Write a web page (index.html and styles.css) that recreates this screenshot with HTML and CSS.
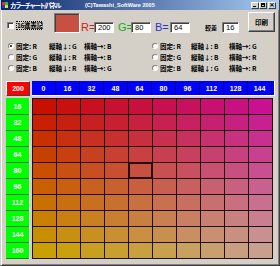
FILE: index.html
```html
<!DOCTYPE html>
<html lang="ja">
<head>
<meta charset="utf-8">
<link rel="stylesheet" href="styles.css">
</head>
<body>
<div class="win">
  <div class="title">
    <span class="ico"><i class="c1"></i><i class="c2"></i><i class="c3"></i><i class="c4"></i></span>
    <span class="ttl">カラーチャート/パネル</span>
    <span class="copy">(C)Tawashi_SoftWare 2005</span>
    <span class="tbtns"><span class="tb tb-min"></span><span class="tb tb-max"></span><span class="tb tb-close">×</span></span>
  </div>
  <div class="tools">
    <div class="chk"><span class="box"></span><span class="lbl">16進表記</span></div>
    <div class="swatch"></div>
    <span class="eq eq-r">R=</span><span class="inp">200</span>
    <span class="eq eq-g">G=</span><span class="inp">80</span>
    <span class="eq eq-b">B=</span><span class="inp">64</span>
    <span class="diff">較差</span><span class="inp inp-s">16</span>
    <span class="btn">印刷</span>
  </div>
  <div class="radios">
    <div class="rad"><span class="dot on"></span><span class="f">固定: R</span><span class="v">縦軸↓: G</span><span class="h">横軸→: B</span></div>
    <div class="rad rad-r"><span class="dot"></span><span class="f">固定: R</span><span class="v">縦軸↓: B</span><span class="h">横軸→: G</span></div>
    <div class="rad"><span class="dot"></span><span class="f">固定: G</span><span class="v">縦軸↓: R</span><span class="h">横軸→: B</span></div>
    <div class="rad rad-r"><span class="dot"></span><span class="f">固定: G</span><span class="v">縦軸↓: B</span><span class="h">横軸→: R</span></div>
    <div class="rad"><span class="dot"></span><span class="f">固定: B</span><span class="v">縦軸↓: R</span><span class="h">横軸→: G</span></div>
    <div class="rad rad-r"><span class="dot"></span><span class="f">固定: B</span><span class="v">縦軸↓: G</span><span class="h">横軸→: R</span></div>
  </div>
  <div class="chart">
    <div class="corner">200</div>
    <div class="hdr">
      <span>0</span><span>16</span><span>32</span><span>48</span><span>64</span><span>80</span><span>96</span><span>112</span><span>128</span><span>144</span>
    </div>
    <div class="side">
      <span>16</span><span>32</span><span>48</span><span>64</span><span>80</span><span>96</span><span>112</span><span>128</span><span>144</span><span>160</span>
    </div>
    <div class="cells">
      <i style="background:rgb(200,16,0)"></i><i style="background:rgb(200,16,16)"></i><i style="background:rgb(200,16,32)"></i><i style="background:rgb(200,16,48)"></i><i style="background:rgb(200,16,64)"></i><i style="background:rgb(200,16,80)"></i><i style="background:rgb(200,16,96)"></i><i style="background:rgb(200,16,112)"></i><i style="background:rgb(200,16,128)"></i><i style="background:rgb(200,16,144)"></i>
      <i style="background:rgb(200,32,0)"></i><i style="background:rgb(200,32,16)"></i><i style="background:rgb(200,32,32)"></i><i style="background:rgb(200,32,48)"></i><i style="background:rgb(200,32,64)"></i><i style="background:rgb(200,32,80)"></i><i style="background:rgb(200,32,96)"></i><i style="background:rgb(200,32,112)"></i><i style="background:rgb(200,32,128)"></i><i style="background:rgb(200,32,144)"></i>
      <i style="background:rgb(200,48,0)"></i><i style="background:rgb(200,48,16)"></i><i style="background:rgb(200,48,32)"></i><i style="background:rgb(200,48,48)"></i><i style="background:rgb(200,48,64)"></i><i style="background:rgb(200,48,80)"></i><i style="background:rgb(200,48,96)"></i><i style="background:rgb(200,48,112)"></i><i style="background:rgb(200,48,128)"></i><i style="background:rgb(200,48,144)"></i>
      <i style="background:rgb(200,64,0)"></i><i style="background:rgb(200,64,16)"></i><i style="background:rgb(200,64,32)"></i><i style="background:rgb(200,64,48)"></i><i style="background:rgb(200,64,64)"></i><i style="background:rgb(200,64,80)"></i><i style="background:rgb(200,64,96)"></i><i style="background:rgb(200,64,112)"></i><i style="background:rgb(200,64,128)"></i><i style="background:rgb(200,64,144)"></i>
      <i style="background:rgb(200,80,0)"></i><i style="background:rgb(200,80,16)"></i><i style="background:rgb(200,80,32)"></i><i style="background:rgb(200,80,48)"></i><i class="sel" style="background:rgb(200,80,64)"></i><i style="background:rgb(200,80,80)"></i><i style="background:rgb(200,80,96)"></i><i style="background:rgb(200,80,112)"></i><i style="background:rgb(200,80,128)"></i><i style="background:rgb(200,80,144)"></i>
      <i style="background:rgb(200,96,0)"></i><i style="background:rgb(200,96,16)"></i><i style="background:rgb(200,96,32)"></i><i style="background:rgb(200,96,48)"></i><i style="background:rgb(200,96,64)"></i><i style="background:rgb(200,96,80)"></i><i style="background:rgb(200,96,96)"></i><i style="background:rgb(200,96,112)"></i><i style="background:rgb(200,96,128)"></i><i style="background:rgb(200,96,144)"></i>
      <i style="background:rgb(200,112,0)"></i><i style="background:rgb(200,112,16)"></i><i style="background:rgb(200,112,32)"></i><i style="background:rgb(200,112,48)"></i><i style="background:rgb(200,112,64)"></i><i style="background:rgb(200,112,80)"></i><i style="background:rgb(200,112,96)"></i><i style="background:rgb(200,112,112)"></i><i style="background:rgb(200,112,128)"></i><i style="background:rgb(200,112,144)"></i>
      <i style="background:rgb(200,128,0)"></i><i style="background:rgb(200,128,16)"></i><i style="background:rgb(200,128,32)"></i><i style="background:rgb(200,128,48)"></i><i style="background:rgb(200,128,64)"></i><i style="background:rgb(200,128,80)"></i><i style="background:rgb(200,128,96)"></i><i style="background:rgb(200,128,112)"></i><i style="background:rgb(200,128,128)"></i><i style="background:rgb(200,128,144)"></i>
      <i style="background:rgb(200,144,0)"></i><i style="background:rgb(200,144,16)"></i><i style="background:rgb(200,144,32)"></i><i style="background:rgb(200,144,48)"></i><i style="background:rgb(200,144,64)"></i><i style="background:rgb(200,144,80)"></i><i style="background:rgb(200,144,96)"></i><i style="background:rgb(200,144,112)"></i><i style="background:rgb(200,144,128)"></i><i style="background:rgb(200,144,144)"></i>
      <i style="background:rgb(200,160,0)"></i><i style="background:rgb(200,160,16)"></i><i style="background:rgb(200,160,32)"></i><i style="background:rgb(200,160,48)"></i><i style="background:rgb(200,160,64)"></i><i style="background:rgb(200,160,80)"></i><i style="background:rgb(200,160,96)"></i><i style="background:rgb(200,160,112)"></i><i style="background:rgb(200,160,128)"></i><i style="background:rgb(200,160,144)"></i>
    </div>
  </div>
</div>
</body>
</html>
```
FILE: styles.css
```css
* { box-sizing: border-box; margin: 0; padding: 0; }
html, body { width: 280px; height: 266px; overflow: hidden; background: #d4d0c8; }
body { font-family: "Noto Sans CJK JP", "Liberation Sans", sans-serif; font-size: 6px; color: #000; }

.win {
  width: 280px; height: 266px;
  background: #d4d0c8;
  border-left: 1px solid #d4d0c8;
  border-right: 1px solid #404040;
  border-bottom: 1px solid #404040;
  box-shadow: inset 1px 0 0 #fff, inset -1px -1px 0 #808080;
  display: flex; flex-direction: column;
}

.title {
  height: 10px;
  display: flex; align-items: center;
  background: linear-gradient(to right, #0a246a, #a6caf0);
  color: #fff;
  line-height: 10px;
  white-space: nowrap;
}
.ico { width: 6px; height: 6px; margin: 0 2px 0 1px; display: grid; grid-template-columns: 3px 3px; }
.ico i { display: block; }
.c1 { background: #e03030; } .c2 { background: #30c030; } .c3 { background: #3030e0; } .c4 { background: #e0e030; }
.ttl { width: 51px; font-size: 6.5px; font-weight: bold; letter-spacing: -1.6px; }
.copy { margin-left: 24px; font-family: "Liberation Sans", sans-serif; font-size: 5.5px; font-weight: bold; }
.tbtns { margin-left: auto; margin-right: 3px; display: flex; }
.tb {
  width: 8px; height: 7px; background: #d4d0c8;
  border: 1px solid; border-color: #fff #404040 #404040 #fff;
  position: relative; color: #000;
  font-size: 7px; line-height: 5px; text-align: center;
  font-family: "DejaVu Sans", sans-serif; font-weight: bold;
}
.tb-min::after { content: ""; position: absolute; left: 1px; bottom: 1px; width: 3px; height: 1px; background: #000; }
.tb-max::after { content: ""; position: absolute; left: 1px; top: 0; width: 4px; height: 4px; border: 1px solid #000; border-top-width: 2px; box-sizing: border-box; }
.tb-close { margin-left: 1px; }

.tools {
  height: 21px; margin-top: 2px;
  display: flex; align-items: flex-end;
  padding-left: 6px;
  white-space: nowrap;
}
.chk { display: flex; align-items: center; margin-bottom: 3px; }
.box { width: 7px; height: 7px; background: #fff; border: 1px solid; border-color: #808080 #fff #fff #808080; box-shadow: inset 1px 1px 0 #404040; }
.lbl { margin-left: 2px; width: 26px; height: 9px; border: 1px dotted #000; line-height: 7px; font-size: 6.5px; font-weight: bold; text-align: center; letter-spacing: -0.3px; }
.swatch {
  width: 26px; height: 20px; margin-left: 12px;
  background: rgb(200,80,64);
  border: 1px solid; border-color: #808080 #fff #fff #808080;
  box-shadow: inset 1px 1px 0 #404040;
}
.eq { font-family: "Liberation Sans", sans-serif; font-size: 11px; line-height: 12px; width: 13px; margin-bottom: 0; }
.eq-r { color: #d02020; margin-left: 1px; }
.eq-g { color: #10b010; margin-left: 4px; }
.eq-b { color: #3030d0; margin-left: 4px; width: 15px; }
.inp {
  width: 20px; height: 11px;
  background: #fff;
  border: 1px solid; border-color: #808080 #fff #fff #808080;
  box-shadow: inset 1px 1px 0 #404040;
  font-family: "Liberation Sans", sans-serif; font-size: 7.5px; line-height: 9px;
  padding-left: 3px;
}
.diff { margin-left: 15px; width: 17px; font-size: 6px; font-weight: bold; line-height: 10px; }
.inp-s { width: 17px; }
.btn {
  width: 27px; height: 20px; margin-left: 9px; margin-bottom: 1px;
  display: flex; align-items: center; justify-content: center;
  border: 1px solid; border-color: #fff #404040 #404040 #fff;
  box-shadow: inset -1px -1px 0 #808080;
  font-size: 6.5px; font-weight: bold;
}

.radios {
  margin-top: 7px;
  display: grid; grid-template-columns: 144px 130px;
  grid-template-rows: repeat(3, 11px);
  padding-left: 6px;
}
.rad { display: flex; align-items: center; height: 11px; font-size: 6.5px; font-weight: bold; white-space: nowrap; }
.dot { width: 6px; height: 6px; border-radius: 50%; background: #fff; border: 1px solid; border-color: #808080 #fff #fff #808080; margin-left: 1px; position: relative; }
.dot.on::after { content: ""; position: absolute; left: 1px; top: 1px; width: 2px; height: 2px; border-radius: 50%; background: #000; }
.f { width: 33px; margin-left: 2px; }
.v { width: 35px; }
.rad-r .f { width: 31px; }
.rad-r .v { width: 38px; }

.chart {
  margin-top: 8px; margin-left: 5px;
  display: grid;
  grid-template-columns: 24px 243px;
  grid-template-rows: 15px 161px;
  column-gap: 2px; row-gap: 2px;
}
.corner, .hdr span, .side span {
  color: #fff; font-family: "Liberation Sans", sans-serif; font-weight: bold; font-size: 7px;
  display: flex; align-items: center; justify-content: center;
}
.corner { background: #ff0000; border: 1px solid; border-color: #fff #404040 #404040 #fff; }
.hdr { display: flex; background: #0000ff; border-right: 1px solid #fff; border-bottom: 1px solid #fff; }
.hdr span { width: 24px; border-right: 1px solid #000080; }
.side { display: flex; flex-direction: column; background: #00ff00; border-right: 1px solid #fff; }
.side span { height: 16px; border-bottom: 1px solid #208020; }
.side span:first-child { height: 17px; }
.cells {
  width: 241px; height: 161px;
  display: grid; grid-template-columns: repeat(10, 24px); grid-template-rows: repeat(10, 16px);
  border-left: 1px solid #201010; border-top: 1px solid #201010;
}
.cells i { display: block; border-right: 1px solid #201010; border-bottom: 1px solid #201010; }
.cells i.sel { box-shadow: inset 0 0 0 1px #201010; }
```
